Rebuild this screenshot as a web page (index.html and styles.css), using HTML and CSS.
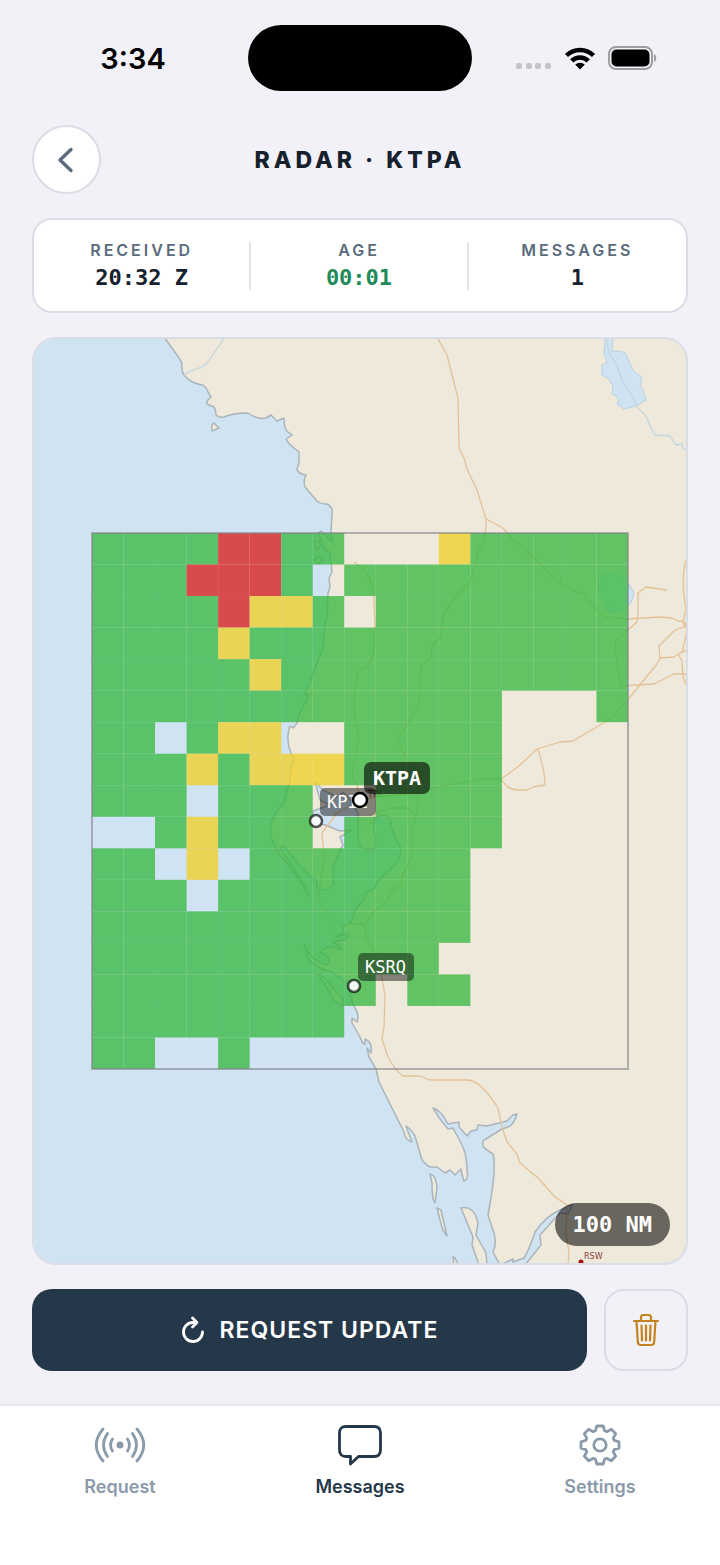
FILE: index.html
```html
<!DOCTYPE html>
<html lang="en">
<head>
    <meta charset="UTF-8">
    <meta name="viewport" content="width=device-width, initial-scale=1.0">
    <title>Radar · KTPA</title>
    <link rel="stylesheet" href="styles.css">
</head>
<body>
    <div class="status-bar">
        <div class="time">3:34</div>
        <div class="island"></div>
        <div class="status-icons">
            <svg width="36" height="24" viewBox="0 0 36 24" fill="#c4c4c9">
                <rect x="0" y="17" width="6" height="6" rx="2"/>
                <rect x="10" y="17" width="6" height="6" rx="2"/>
                <rect x="19" y="17" width="6" height="6" rx="2"/>
                <rect x="29" y="17" width="6" height="6" rx="2"/>
            </svg>
            <svg width="32" height="24" viewBox="0 0 32 24">
                <path d="M2.5 9.5a19.5 19.5 0 0 1 27 0M7.7 14.8a12 12 0 0 1 16.6 0" fill="none" stroke="#000" stroke-width="4.4"/>
                <path d="M16 23.5l-4.8-4.9a7 7 0 0 1 9.6 0z"/>
            </svg>
            <svg width="50" height="24" viewBox="0 0 50 24">
                <rect x="1" y="1" width="43" height="22" rx="7" fill="none" stroke="#9d9da2" stroke-width="2"/>
                <rect x="3.5" y="3.5" width="38" height="17" rx="5"/>
                <path d="M46 8c3 1 3 7 0 8z" fill="#9d9da2"/>
            </svg>
        </div>
    </div>

    <header class="header">
        <button class="back" aria-label="Back">
            <svg width="24" height="28" viewBox="0 0 24 28"><path d="M16 3.5L5 14l11 10.5" fill="none" stroke="#5a6b7d" stroke-width="3.4" stroke-linecap="round" stroke-linejoin="round"/></svg>
        </button>
        <h1>RADAR · KTPA</h1>
    </header>

    <main class="content">
        <dl class="stats">
            <div class="stat"><dt>RECEIVED</dt><dd>20:32 Z</dd></div>
            <div class="stat"><dt>AGE</dt><dd class="fresh">00:01</dd></div>
            <div class="stat"><dt>MESSAGES</dt><dd>1</dd></div>
        </dl>

        <div class="map">
            <svg class="map-canvas" viewBox="34 339 652 924">
                <rect class="water" x="34" y="339" width="652" height="924"/>

                <!-- mainland -->
                <path class="land" d="M164 337L177 355 182 363Q181 371 184 375Q189 381 195 383T203 385Q207 388 208 392L211 397 207 401Q206 404 209 405L214 407Q216 410 216 415 219 418 224 417Q233 413 248 413 258 420 266 418L271 415 277 421 284 418Q284 430 288 432L292 435 286 439Q288 444 299 452L299 463 297 469Q298 474 306 475 303 481 305 487L317 501Q321 504 327 504 333 507 332 513L331 532 332 542 321 531 318 533 326 551 330 552 332 572 329 578 330 587 328 593 327 617 324 630 323 648 317 663 312 677 304 695 308 694 307 700 300 712 297 723 293 728Q289 724 289 729 286 742 291 753L294 759 291 767 290 780 285 800 278 810Q271 819 270 831 272 847 290 867L300 881 309 897 304 885Q293 866 280 848 281 843 288 851Q301 869 314 879 318 879 317 888 325 893 333 885 334 877 333 867L340 850 343 845 340 837 352 830 340 831 325 825 313 822V811L330 805 320 800 315 782 323 790 337 797 343 792 350 800 358 813V837Q359 848 364 849H375L376 840Q371 824 376 818 383 812 390 818 391 832 401 848 401 859 393 867L377 882 375 888 366 893 364 900 355 910 351 922 343 927 344 933 335 937 348 934Q349 941 332 942 340 945 343 950 331 946 327 947L320 952 328 957Q331 970 318 961 309 957 304 943L308 958Q314 968 332 972L347 983 350 993 353 1005Q360 1014 357 1022L352 1018V1023L360 1037Q363 1045 365 1044V1039Q373 1042 371 1053L367 1048 369 1057 376 1069 379 1082 404 1132Q405 1140 412 1142L406 1126Q412 1130 415 1136L422 1160Q426 1165 430 1167H437L445 1173 450 1170 455 1175 461 1169Q462 1175 464 1181 469 1179 467 1170 467 1154 461 1143L453 1128 448 1129 440 1119 433 1108Q441 1110 448 1124L459 1122V1127L467 1136 471 1131 477 1130 478 1125 487 1126 507 1121 513 1115 517 1114Q514 1125 508 1127L502 1129Q489 1137 483 1141V1146Q486 1150 493 1154 497 1168 488 1215L494 1233Q497 1244 493 1252L500 1265 513 1259V1262L524 1258Q530 1248 535 1232 546 1216 560 1210L573 1204 568 1214 560 1213 540 1235 541 1245 525 1265H688V337Z"/>

                <!-- islands -->
                <g class="land">
                    <path d="M214 423L219 428 212 431Q211 424 214 423Z"/>
                    <path d="M314 542l5-1 2 5-5 3zM314 560l5-3 4 3-4 4z"/>
                    <path d="M318 974Q321 974 327 981L343 999V1007L333 999 326 986Z"/>
                    <path d="M430 1174Q436 1175 437 1187L435 1203Q432 1200 432 1183Z"/>
                    <path d="M437 1208L441 1210 447 1236Q443 1232 441 1224Z"/>
                    <path d="M461 1208Q474 1205 478 1223L476 1235 486 1253 487 1265H479L472 1245 473 1237Z"/>
                    <path d="M453 1257Q455 1256 458 1265H454Z"/>
                </g>

                <!-- lakes and rivers -->
                <g class="lake">
                    <path d="M605 337H613L612 351Q622 351 625 353L634 372 642 377 640 387 643 389 646 400 636 406 624 409 617 404 619 400 616 396 612 394 613 387Q610 378 602 375V365L607 363 604 353Z"/>
                    <path d="M602 575H620L629 584 634 593 631 603 623 610 612 613 604 608 609 607 599 590Q596 580 602 575Z"/>
                </g>
                <path class="river" d="M607 337Q607 350 612 358 618 365 623 383L632 395 637 407 646 416Q650 427 655 435 664 435 670 436L676 445 682 444Q682 449 687 451M184 375Q188 371 202 367L207 363 225 337"/>

                <!-- highways -->
                <path class="road" d="M437 337L447 355 458 398 459 448 464 458 467 469 477 490 486 519V527L483 543 477 555 475 567 470 582 455 598 444 613 440 638 432 645 431 657 421 666 419 705 397 741 418 777V797Q418 817 412 827V857L402 877V883L393 890 386 902 373 913 365 924 366 938Q377 957 380 967L385 995 384 1027 382 1039 388 1057Q395 1070 403 1076H420L430 1080H468Q480 1080 498 1108L502 1127 507 1142 517 1154 520 1163 538 1178 555 1197 567 1205 566 1233 569 1253 568 1265"/>
                <path class="road" d="M354 562Q374 575 374 600L375 627 373 656 368 666 358 672 354 695V713L359 737 353 768 352 778 357 785 360 800 337 813 322 833 324 857 322 873 319 890 320 903 332 922Q338 925 365 924M367 827L377 813 390 808H407L415 815"/>
                <path class="road" d="M360 800L377 797 420 793 440 786 468 782 477 779H501L519 766 537 749 560 742 573 741 612 718 630 697 657 664 660 658 659 646 675 630 684 627 686 622M501 779Q508 790 517 790H527L533 787 545 785Q545 771 538 749"/>
                <path class="road" d="M486 519L503 528 513 540 533 556 553 577Q565 587 584 595L598 611 606 617 628 619 660 617 672 618 678 621H683L687 627M667 590L646 587 638 593V613L637 622 616 641Q614 650 621 686L654 684 674 674H687M687 558Q680 576 686 609L683 622 687 630 682 653M659 658L674 657 680 653 687 650M678 654L682 661 683 677 687 687"/>

                <text class="place" x="368" y="797">TPA</text>
                <circle class="place-dot" cx="581" cy="1262" r="2.5"/>
                <text class="place" x="584" y="1259">RSW</text>

                <g id="cells"></g>
                <rect class="coverage" x="92" y="533" width="536" height="536"/>

                <g class="station minor">
                    <rect x="320" y="788" width="56" height="28" rx="5"/>
                    <text x="327" y="808">KPIE</text>
                    <circle cx="316" cy="821" r="6"/>
                </g>
                <g class="station minor">
                    <rect x="358" y="953" width="56" height="28" rx="5"/>
                    <text x="365" y="973">KSRQ</text>
                    <circle cx="354" cy="986" r="6"/>
                </g>
                <g class="station">
                    <rect x="364" y="762" width="66" height="32" rx="7"/>
                    <text x="373" y="785">KTPA</text>
                    <circle cx="360" cy="800" r="7"/>
                </g>
            </svg>
            <span class="scale">100 NM</span>
        </div>

        <div class="actions">
            <button class="update">
                <svg width="24" height="28" viewBox="0 0 24 28" fill="none" stroke="#fff" stroke-width="2.8" stroke-linecap="round" stroke-linejoin="round"><path d="M21.5 16a9.5 9.5 0 1 1-9.5-9.500h4M11.500 2l4.500 4.500-4.500 4.500"/></svg>
                REQUEST UPDATE
            </button>
            <button class="delete" aria-label="Delete">
                <svg width="28" height="34" viewBox="0 0 28 34" fill="none" stroke="#c5831f" stroke-width="2.2" stroke-linecap="round" stroke-linejoin="round"><path d="M2 8h24M9 8V4.5q0-2.5 2.500-2.500h5q2.500 0 2.500 2.500V8M4.500 8l1.300 21q.2 3 3 3h10.400q2.800 0 3-3l1.300-21M9.500 12.500l.5 15M14 12.500v15M18.500 12.500l-.5 15"/></svg>
            </button>
        </div>
    </main>

    <nav class="tabs">
        <a href="#request">
            <svg width="52" height="44" viewBox="0 0 52 44" fill="none" stroke="#8b9aaa" stroke-width="2.8" stroke-linecap="round"><circle cx="26" cy="22" r="3.5" fill="#8b9aaa" stroke="none"/><path d="M18.500 16q-4 6 0 12M13.500 10.500q-8 11.500 0 23M9 6q-13.500 16 0 32M33.500 16q4 6 0 12M38.500 10.500q8 11.500 0 23M43 6q13.500 16 0 32"/></svg>
            Request
        </a>
        <a href="#messages" class="active">
            <svg width="52" height="44" viewBox="0 0 52 44" fill="none" stroke="#25384a" stroke-width="2.8" stroke-linejoin="round"><path d="M12 3.500h28q6.500 0 6.500 6.500v17q0 6.500-6.500 6.500H24.500l-8 7.500v-7.500H12q-6.500 0-6.500-6.500V10q0-6.500 6.500-6.500z"/></svg>
            Messages
        </a>
        <a href="#settings">
            <svg width="52" height="44" viewBox="-26 -22 52 44" fill="none" stroke="#8b9aaa" stroke-width="2.8" stroke-linejoin="round">
                <circle r="6.2"/>
                <path d="M-3.2-19H3.2L4.6-14.2 6.8-13.3 11.2-15.7 15.7-11.2 13.3-6.8 14.2-4.6 19-3.2V3.2L14.2 4.6 13.3 6.8 15.7 11.2 11.2 15.7 6.8 13.3 4.6 14.2 3.2 19H-3.2L-4.6 14.2-6.8 13.3-11.2 15.7-15.7 11.2-13.3 6.8-14.2 4.6-19 3.2V-3.2L-14.2-4.6-13.3-6.8-15.7-11.2-11.2-15.7-6.8-13.3-4.6-14.2Z"/>
            </svg>
            Settings
        </a>
    </nav>
    <script src="radar.js"></script>
</body>
</html>
```
FILE: styles.css
```css
* {
    box-sizing: border-box;
}
body {
    margin: 0;
    min-height: 100vh;
    display: flex;
    flex-direction: column;
    background-color: #f2f1f7;
    color: #16212d;
    font-family: Inter, "Liberation Sans", sans-serif;
}
button {
    font-family: inherit;
    padding: 0;
    cursor: pointer;
}
svg {
    display: block;
}
.status-bar {
    display: grid;
    grid-template-columns: 1fr 224px 1fr;
    align-items: center;
    padding: 25px 0 34px;
}
.time {
    font-size: 29px;
    font-weight: 600;
    color: #000;
    padding-left: 18px;
    text-align: center;
}
.island {
    height: 66px;
    border-radius: 33px;
    background-color: #000;
}
.status-icons {
    display: flex;
    gap: 12px;
    padding-left: 44px;
}
.header {
    display: grid;
    grid-template-columns: 69px 1fr 69px;
    align-items: center;
    padding: 0 32px;
    margin-bottom: 24px;
}
.back {
    display: flex;
    align-items: center;
    justify-content: center;
    height: 69px;
    border: 2px solid #d9dde5;
    border-radius: 50%;
    background-color: #fff;
}
h1 {
    margin: 0;
    font-size: 23px;
    font-weight: 800;
    letter-spacing: 4px;
    text-align: center;
}
.content {
    display: flex;
    flex-direction: column;
    gap: 24px;
    padding: 0 32px 33px;
}
.stats {
    display: grid;
    grid-template-columns: 1fr 1fr 1fr;
    margin: 0;
    padding: 22px 0 21px;
    background-color: #fff;
    border: 2px solid #d9dde5;
    border-radius: 20px;
}
.stat {
    display: flex;
    flex-direction: column;
    gap: 7px;
    text-align: center;
    border-right: 2px solid #e1e4ea;
}
.stat:last-child {
    border-right: 0;
}
dt {
    font-size: 16px;
    line-height: 16px;
    font-weight: 600;
    letter-spacing: 3px;
    color: #5a6b7d;
}
dd {
    margin: 0;
    font-family: "DejaVu Sans Mono", monospace;
    font-size: 22px;
    line-height: 25px;
    font-weight: 700;
}
.fresh {
    color: #208a59;
}
.map {
    position: relative;
    border: 2px solid #d9dde5;
    border-radius: 24px;
    overflow: hidden;
}
.map-canvas {
    width: 100%;
    height: auto;
}
.water {
    fill: #d0e3f2;
}
.land {
    fill: #efe9db;
    stroke: #aab4ba;
    stroke-width: 1.5;
    stroke-linejoin: round;
}
.lake {
    fill: #d0e3f2;
    stroke: #b5d1e3;
}
.river {
    fill: none;
    stroke: #c2d6dd;
    stroke-width: 1.3;
}
.road {
    fill: none;
    stroke: #e3c197;
    stroke-width: 1.3;
    stroke-linejoin: round;
}
.place {
    font-family: "DejaVu Sans", sans-serif;
    font-size: 8px;
    fill: #8a3b3b;
}
.place-dot {
    fill: #a50f12;
}
.cell {
    fill-opacity: 0.78;
    stroke: #fff;
    stroke-opacity: 0.02;
}
.light {
    fill: #38b842;
}
.moderate {
    fill: #f0cf29;
}
.heavy {
    fill: #db1f1b;
}
.coverage {
    fill: none;
    stroke: #828488;
    stroke-opacity: 0.6;
    stroke-width: 2;
}
.station rect {
    fill: #000;
    fill-opacity: 0.6;
}
.station text {
    font-family: "DejaVu Sans Mono", monospace;
    font-size: 20px;
    font-weight: 700;
    fill: #fff;
}
.station circle {
    fill: #fff;
    stroke: #000;
    stroke-width: 2.5;
}
.minor rect {
    fill-opacity: 0.45;
}
.minor text {
    font-size: 17px;
    font-weight: 400;
}
.minor circle {
    fill-opacity: 0.9;
    stroke-opacity: 0.65;
}
.scale {
    position: absolute;
    right: 16px;
    bottom: 17px;
    padding: 0 18px;
    border-radius: 22px;
    background-color: rgba(0, 0, 0, 0.56);
    color: #fff;
    font-family: "DejaVu Sans Mono", monospace;
    font-size: 22px;
    line-height: 43px;
    font-weight: 700;
}
.actions {
    display: flex;
    gap: 17px;
}
.update {
    flex: 1;
    display: flex;
    align-items: center;
    justify-content: center;
    gap: 15px;
    height: 82px;
    border: 0;
    border-radius: 20px;
    background-color: #25384a;
    color: #fff;
    font-size: 23px;
    font-weight: 600;
    letter-spacing: 1px;
}
.delete {
    display: flex;
    align-items: center;
    justify-content: center;
    width: 84px;
    border: 2px solid #d9dde5;
    border-radius: 20px;
    background-color: transparent;
}
.tabs {
    flex: 1;
    display: grid;
    grid-template-columns: 1fr 1fr 1fr;
    align-items: start;
    padding: 17px 0 60px;
    background-color: #fff;
    border-top: 2px solid #e6e8ee;
}
.tabs a {
    display: flex;
    flex-direction: column;
    align-items: center;
    gap: 8px;
    color: #8b9aaa;
    font-size: 18px;
    line-height: 24px;
    font-weight: 600;
    text-decoration: none;
}
.tabs .active {
    color: #25384a;
}
```
FILE: radar.js
```js
// g = light, y = moderate, r = heavy, . = no echo
const rows = [
    'ggggrrgg...yggggg',
    'gggrrrg.ggggggggg',
    'ggggryyg.gggggggg',
    'ggggygggggggggggg',
    'gggggyggggggggggg',
    'ggggggggggggg...g',
    'gg.gyy..ggggg....',
    'gggygyyyggggg....',
    'ggg.ggg..gggg....',
    '..gyggg.ggggg....',
    'gg.y.ggggggg.....',
    'ggg.gggggggg.....',
    'gggggggggggg.....',
    'ggggggggggg......',
    'ggggggggg.gg.....',
    'gggggggg.........',
    'gg..g............'
];
const levels = { g: 'light', y: 'moderate', r: 'heavy' };
const size = 536 / 17;
const cells = document.getElementById('cells');

rows.forEach((row, y) => {
    [...row].forEach((level, x) => {
        if (!levels[level]) return;
        const rect = document.createElementNS('http://www.w3.org/2000/svg', 'rect');
        rect.setAttribute('x', 92 + x * size);
        rect.setAttribute('y', 533 + y * size);
        rect.setAttribute('width', size);
        rect.setAttribute('height', size);
        rect.setAttribute('class', 'cell ' + levels[level]);
        cells.appendChild(rect);
    });
});
```
